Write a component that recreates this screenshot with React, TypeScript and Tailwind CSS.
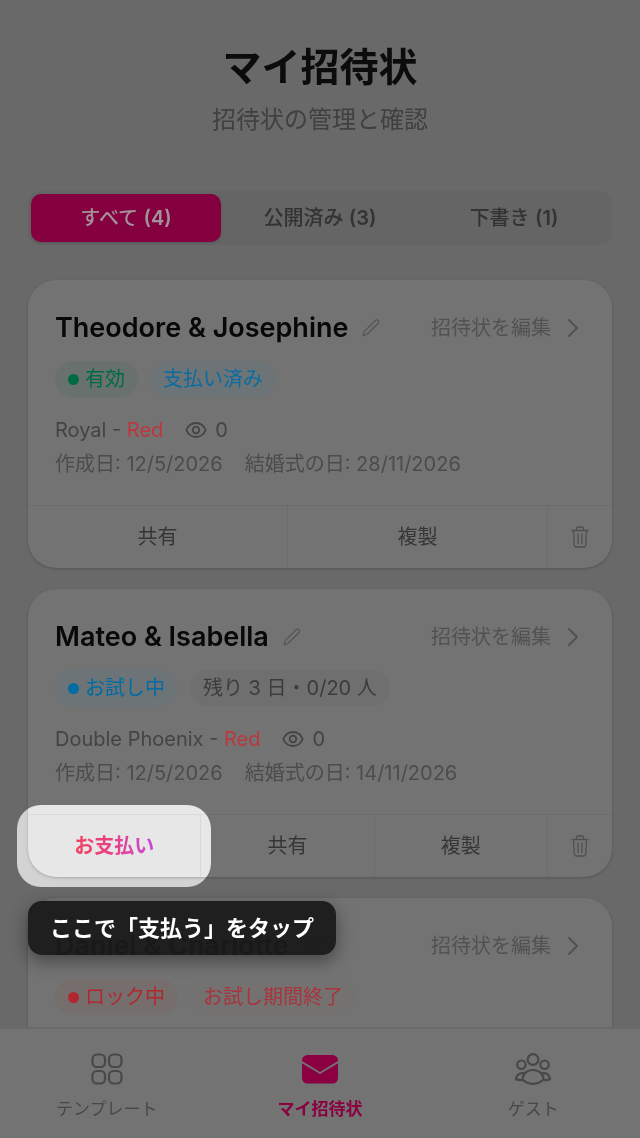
import React from "react";
import clsx from "clsx";

interface Badge {
  label: string;
  dot?: string;
  className: string;
}

interface Invitation {
  id: number;
  name: string;
  badges: Badge[];
  template: string;
  color: string;
  views: number;
  createdAt: string;
  weddingDate: string;
  needsPayment: boolean;
}

const INVITATIONS: Invitation[] = [
  {
    id: 1,
    name: "Theodore & Josephine",
    badges: [
      { label: "有効", dot: "bg-[#006b42]", className: "bg-[#69716e] text-[#006b42]" },
      { label: "支払い済み", className: "bg-[#6c7478] text-[#0a6ca0]" },
    ],
    template: "Royal",
    color: "Red",
    views: 0,
    createdAt: "12/5/2026",
    weddingDate: "28/11/2026",
    needsPayment: false,
  },
  {
    id: 2,
    name: "Mateo & Isabella",
    badges: [
      { label: "お試し中", dot: "bg-[#006ca2]", className: "bg-[#6c7478] text-[#006ca2]" },
      { label: "残り 3 日・0/20 人", className: "bg-[#6f6f6f] text-[#3c3c3c]" },
    ],
    template: "Double Phoenix",
    color: "Red",
    views: 0,
    createdAt: "12/5/2026",
    weddingDate: "14/11/2026",
    needsPayment: true,
  },
  {
    id: 3,
    name: "Daniel & Charlotte",
    badges: [
      { label: "ロック中", dot: "bg-[#b0282e]", className: "bg-[#766d6d] text-[#b0282e]" },
      { label: "お試し期間終了", className: "bg-[#747171] text-[#a8343c]" },
    ],
    template: "Royal",
    color: "Red",
    views: 0,
    createdAt: "12/5/2026",
    weddingDate: "14/11/2026",
    needsPayment: false,
  },
];

const TABS = [
  { label: "すべて", count: 4 },
  { label: "公開済み", count: 3 },
  { label: "下書き", count: 1 },
];

const PencilIcon = () => (
  <svg viewBox="0 0 18 18" className="size-[18px] text-[#555555]" fill="none" stroke="currentColor" strokeWidth="1.2" strokeLinejoin="round" strokeLinecap="round">
    <path d="M1 17 2.4 12.400 13.200 1.700c.9-.9 2-.9 2.900-.1.800.9.800 2-.1 2.900L5.200 15.200 1 17Z" />
  </svg>
);

const EyeIcon = () => (
  <svg viewBox="0 0 22 18" className="h-[18px] w-[22px]" fill="none" stroke="currentColor" strokeWidth="1.8">
    <path d="M1.300 9C3.200 4.600 6.700 2 11 2s7.800 2.600 9.700 7c-1.900 4.400-5.400 7-9.700 7S3.200 13.400 1.300 9Z" />
    <circle cx="11" cy="9" r="3.300" />
  </svg>
);

const ChevronIcon = () => (
  <svg viewBox="0 0 12 20" className="h-5 w-3" fill="none" stroke="currentColor" strokeWidth="2" strokeLinecap="round" strokeLinejoin="round">
    <path d="m2 2 8 8-8 8" />
  </svg>
);

const TrashIcon = () => (
  <svg viewBox="0 0 18 22" className="h-[22px] w-[18px]" fill="none" stroke="currentColor" strokeWidth="1.3" strokeLinecap="round" strokeLinejoin="round">
    <path d="M1 4.500h16M5.500 4.300V2.500c0-.9.6-1.500 1.500-1.500h4c.9 0 1.500.6 1.500 1.500v1.800M2.500 4.500l.7 14.300c.1 1.300.8 2.200 2.100 2.200h7.400c1.300 0 2-.9 2.100-2.200l.7-14.300M7 8l.2 9.500M11 8l-.2 9.500" />
  </svg>
);

const GridIcon = () => (
  <svg viewBox="0 0 32 32" className="size-8" fill="none" stroke="currentColor" strokeWidth="2.2">
    <rect x="1.500" y="1.500" width="12.500" height="12.500" rx="4.500" />
    <rect x="18" y="1.500" width="12.500" height="12.500" rx="4.500" />
    <rect x="1.500" y="18" width="12.500" height="12.500" rx="4.500" />
    <rect x="18" y="18" width="12.500" height="12.500" rx="4.500" />
  </svg>
);

const MailIcon = () => (
  <svg viewBox="0 0 36 32" className="h-8 w-9" fill="currentColor">
    <path d="M0 8V7.500A5.500 5.500 0 0 1 5.500 2h25A5.500 5.500 0 0 1 36 7.500V8L18 19 0 8Z" />
    <path d="M0 10.200V25a5.500 5.500 0 0 0 5.500 5.500h25A5.500 5.500 0 0 0 36 25V10.200L18 21 0 10.200Z" />
  </svg>
);

const GuestsIcon = () => (
  <svg viewBox="0 0 36 32" className="h-8 w-9" fill="none" stroke="currentColor" strokeWidth="2.2">
    <circle cx="18" cy="6.500" r="5.400" />
    <circle cx="6.400" cy="11.700" r="4.200" />
    <circle cx="29.600" cy="11.700" r="4.200" />
    <path d="M7.500 26.500C7.500 21 12 17 18 17s10.500 4 10.500 9.500c-2.700 2.700-6.300 4.300-10.500 4.300s-7.800-1.600-10.500-4.300Z" />
    <path d="M10 20.500c-4.700-1.300-8.800 1-9 5.700 2.200.9 4.300 1.100 6.500.7M26 20.500c4.700-1.300 8.800 1 9 5.700-2.200.9-4.300 1.100-6.500.7" />
  </svg>
);

const PayButton = () => (
  <div className="relative flex flex-1">
    <div className="pointer-events-none absolute -inset-x-[11px] -inset-y-[10px] rounded-[24px] bg-[#808080] mix-blend-color-dodge" />
    <button className="relative flex-1 font-bold">
      <span className="bg-gradient-to-r from-[#f4405f] via-[#e83f86] to-[#c844dc] bg-clip-text text-transparent">お支払い</span>
    </button>
    <div
      role="tooltip"
      className="absolute top-full left-0 z-10 mt-6 rounded-[14px] bg-[#1a1a1a]/95 px-[22px] py-3 text-[22px] leading-[30px] font-bold whitespace-nowrap text-white shadow-[0_6px_18px_rgba(0,0,0,0.4)]"
    >
      ここで「支払う」をタップ
    </div>
  </div>
);

const InvitationCard: React.FC<{ item: Invitation }> = ({ item }) => (
  <article className="rounded-[28px] bg-[#737373] shadow-[0_1px_3px_rgba(0,0,0,0.2)]">
    <div className="px-[27px] pt-7 pb-6">
      <div className="flex items-center justify-between">
        <div className="flex items-center gap-[14px]">
          <h2 className="text-[27px] leading-10 font-semibold text-[#080808]">{item.name}</h2>
          <button aria-label="名前を編集">
            <PencilIcon />
          </button>
        </div>
        <a href="#edit" className="flex items-center gap-4 pr-[6px] text-[20px] text-[#525252]">
          招待状を編集
          <ChevronIcon />
        </a>
      </div>

      <div className="mt-[13px] flex gap-3">
        {item.badges.map((badge) => (
          <span key={badge.label} className={clsx("flex items-center gap-[6px] rounded-full px-[13px] text-[20px] leading-9", badge.className)}>
            {badge.dot && <span className={clsx("size-[11px] rounded-full", badge.dot)} />}
            {badge.label}
          </span>
        ))}
      </div>

      <div className="mt-4 flex items-center text-[20px] leading-[34px] text-[#444444]">
        <span>
          {item.template} - <span className="text-[#bb383e]">{item.color}</span>
        </span>
        <span className="ml-[22px] flex items-center gap-2">
          <EyeIcon />
          {item.views}
        </span>
      </div>
      <div className="flex gap-[22px] text-[20px] leading-[34px] text-[#4c4c4c]">
        <span>作成日: {item.createdAt}</span>
        <span>結婚式の日: {item.weddingDate}</span>
      </div>
    </div>

    <div className="flex h-[63px] divide-x divide-[#6c6c6c] border-t border-[#6c6c6c] text-[20px] text-[#363636]">
      {item.needsPayment && <PayButton />}
      <button className="flex-1">共有</button>
      <button className="flex-1">複製</button>
      <button aria-label="削除" className="flex w-16 items-center justify-center text-[#505050]">
        <TrashIcon />
      </button>
    </div>
  </article>
);

const NAV_ITEMS = [
  { label: "テンプレート", icon: <GridIcon />, active: false },
  { label: "マイ招待状", icon: <MailIcon />, active: true },
  { label: "ゲスト", icon: <GuestsIcon />, active: false },
];

const BottomNav = () => (
  <nav className="flex h-[111px] shrink-0 border-t-2 border-[#6a6a6a] bg-[#737373]">
    {NAV_ITEMS.map((item) => (
      <a
        key={item.label}
        href="#nav"
        className={clsx(
          "flex flex-1 flex-col items-center gap-2 pt-6 text-[17px] leading-8",
          item.active ? "font-bold text-[#8a0040]" : "text-[#484848]"
        )}
      >
        {item.icon}
        {item.label}
      </a>
    ))}
  </nav>
);

export default function App() {
  return (
    <div className="flex h-screen flex-col bg-[#696969] font-['Inter','Noto_Sans_CJK_JP',sans-serif]">
      <main className="min-h-0 flex-1 overflow-x-hidden overflow-y-auto px-7 [scrollbar-width:none]">
        <header className="pt-10 text-center">
          <h1 className="text-[39px] leading-[54px] font-bold text-[#0c0c0c]">マイ招待状</h1>
          <p className="mt-[10px] text-[24px] leading-8 text-[#404040]">招待状の管理と確認</p>
        </header>

        <div role="tablist" className="mt-[55px] flex gap-1 rounded-xl bg-[#656565] p-[3px]">
          {TABS.map((tab, i) => (
            <button
              key={tab.label}
              role="tab"
              aria-selected={i === 0}
              className={clsx(
                "h-12 flex-1 rounded-[10px] text-[20px] font-medium",
                i === 0 ? "bg-[#84003e] text-[#a3939a] shadow-sm" : "text-[#333333]"
              )}
            >
              {tab.label} <span className="font-semibold">({tab.count})</span>
            </button>
          ))}
        </div>

        <div className="mt-[35px] flex flex-col gap-[21px] pb-7">
          {INVITATIONS.map((item) => (
            <InvitationCard key={item.id} item={item} />
          ))}
        </div>
      </main>
      <BottomNav />
    </div>
  );
}
